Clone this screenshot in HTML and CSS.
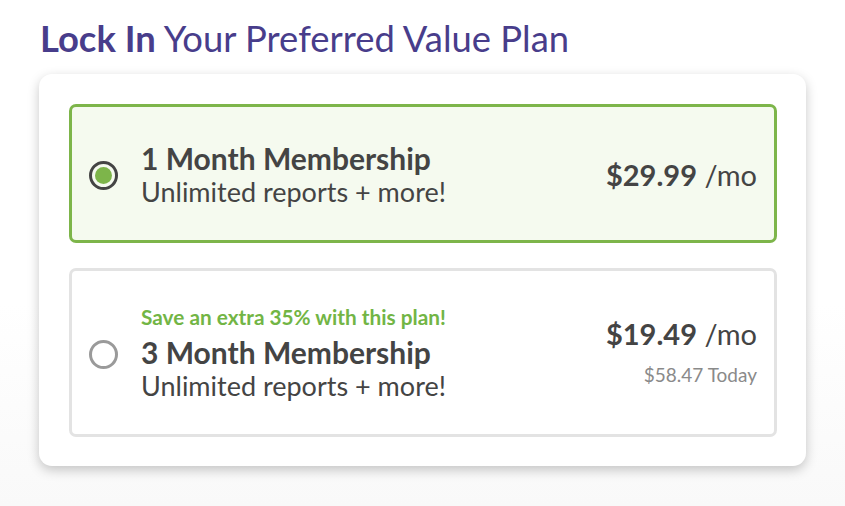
FILE: index.html
```html
<!DOCTYPE html>
<html lang="en">
<head>
<meta charset="utf-8">
<title>Lock In Your Preferred Value Plan</title>
<link rel="stylesheet" href="styles.css">
</head>
<body>
<main class="page">
  <h1 class="heading"><strong>Lock In</strong> Your Preferred Value Plan</h1>
  <section class="card">
    <label class="plan plan--selected">
      <span class="radio radio--on"><span class="radio-dot"></span></span>
      <span class="plan-info">
        <span class="plan-title">1 Month Membership</span>
        <span class="plan-sub">Unlimited reports + more!</span>
      </span>
      <span class="plan-price">
        <span class="price"><b>$29.99</b> /mo</span>
      </span>
    </label>
    <label class="plan">
      <span class="radio"></span>
      <span class="plan-info">
        <span class="plan-promo">Save an extra 35% with this plan!</span>
        <span class="plan-title">3 Month Membership</span>
        <span class="plan-sub">Unlimited reports + more!</span>
      </span>
      <span class="plan-price">
        <span class="price"><b>$19.49</b> /mo</span>
        <span class="price-today">$58.47 Today</span>
      </span>
    </label>
  </section>
</main>
</body>
</html>
```

FILE: styles.css
```css
html, body {
  margin: 0;
  padding: 0;
}
body {
  font-family: Lato, "Open Sans", sans-serif;
  color: #444;
  background: linear-gradient(#ffffff 0%, #ffffff 60%, #f9f9f9 100%);
  min-height: 506px;
}
.page {
  padding: 17px 39px 0 39px;
}
.heading {
  margin: 0 0 14px 1px;
  font-size: 36.4px;
  line-height: 43px;
  font-weight: 400;
  color: #483d8b;
}
.heading strong {
  font-weight: 700;
}
.card {
  background: #fff;
  border-radius: 13px;
  box-shadow: 0 4px 12px rgba(0, 0, 0, 0.22);
  padding: 30px 29px 29px 30px;
  display: flex;
  flex-direction: column;
  gap: 25px;
}
.plan {
  display: flex;
  align-items: center;
  border: 3px solid #e3e3e3;
  border-radius: 7px;
  padding: 34px 17px 31px 17px;
  background: #fff;
}
.plan--selected {
  border-color: #7db54a;
  background: #f5faef;
}
.radio {
  flex: none;
  width: 29px;
  height: 29px;
  box-sizing: border-box;
  border: 3px solid #9a9a9a;
  border-radius: 50%;
  display: flex;
  align-items: center;
  justify-content: center;
}
.radio--on {
  border-color: #444;
}
.radio-dot {
  width: 17px;
  height: 17px;
  border-radius: 50%;
  background: #7db54a;
}
.plan-info {
  flex: 1;
  display: flex;
  flex-direction: column;
  margin-left: 23px;
}
.plan-title {
  font-size: 30px;
  line-height: 34px;
  font-weight: 700;
  color: #444;
}
.plan-sub {
  font-size: 27px;
  line-height: 34px;
  color: #444;
}
.plan-promo {
  font-size: 20.8px;
  line-height: 24px;
  font-weight: 700;
  color: #72b545;
  margin-bottom: 6px;
}
.plan-price {
  display: flex;
  flex-direction: column;
  align-items: flex-end;
  text-align: right;
}
.price {
  font-size: 29px;
  line-height: 36px;
  color: #444;
}
.price b {
  font-weight: 700;
}
.price-today {
  font-size: 19px;
  line-height: 24px;
  color: #8a8a8a;
  margin-top: 11px;
  margin-bottom: 6px;
}
```
